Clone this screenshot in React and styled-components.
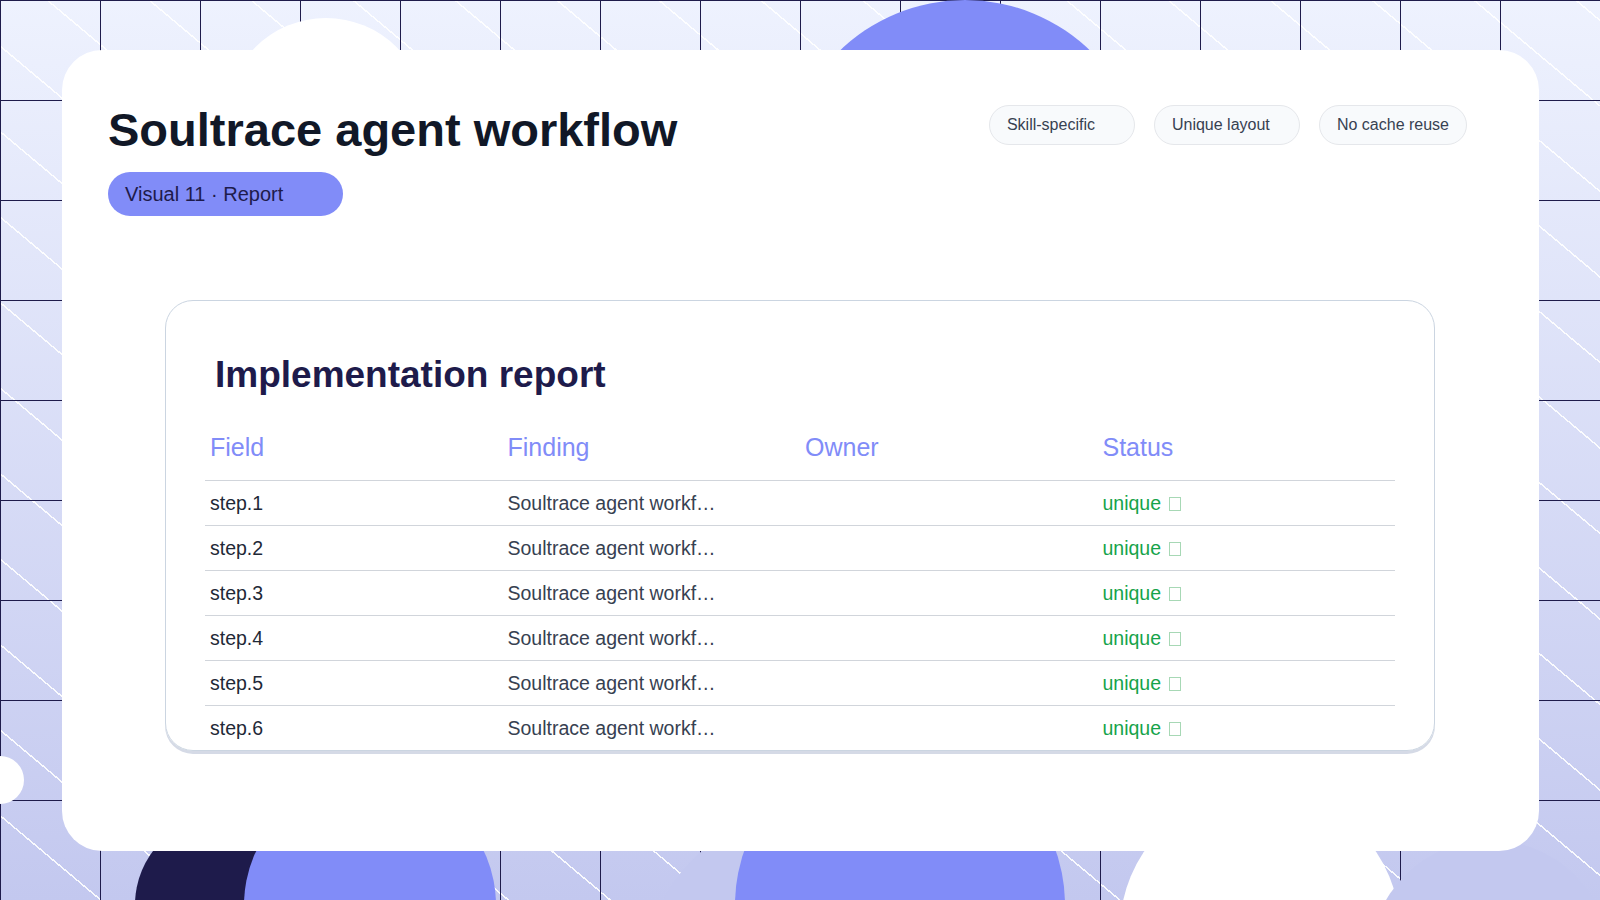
import React from "react";
import styled, { createGlobalStyle } from "styled-components";

const Global = createGlobalStyle`
  html, body { margin: 0; padding: 0; }
  body { font-family: "Liberation Sans", Arial, sans-serif; }
`;

const Stage = styled.div`
  position: relative;
  width: 1600px;
  height: 900px;
  overflow: hidden;
  background:
    repeating-linear-gradient(to right, #1e1b4b 0 1px, transparent 1px 100px),
    repeating-linear-gradient(to bottom, #1e1b4b 0 1px, transparent 1px 100px),
    repeating-linear-gradient(40deg, transparent 0 64px, rgba(255,255,255,0.9) 64px 65.5px),
    linear-gradient(to bottom, #eef2fe, #c3c8ef);
  display: flex;
  padding: 50px 61px 49px 62px;
  box-sizing: border-box;
`;

const Blob = styled.div`
  position: absolute;
  border-radius: 50%;
  background: ${p => p.$c};
  left: ${p => p.$x - p.$r}px;
  top: ${p => p.$y - p.$r}px;
  width: ${p => p.$r * 2}px;
  height: ${p => p.$r * 2}px;
`;

const Card = styled.main`
  position: relative;
  z-index: 1;
  flex: 1;
  background: #fff;
  border-radius: 40px;
  padding: 52px 72px 0 46px;
  display: flex;
  flex-direction: column;
`;

const Header = styled.header`
  display: flex;
  justify-content: space-between;
  align-items: flex-start;
`;

const TitleBlock = styled.div`
  display: flex;
  flex-direction: column;
  align-items: flex-start;
  gap: 14px;
`;

const Title = styled.h1`
  margin: 0;
  font-size: 47px;
  font-weight: 700;
  color: #111827;
  line-height: 56px;
`;

const Pill = styled.div`
  width: 235px;
  height: 44px;
  box-sizing: border-box;
  padding: 0 17px;
  display: flex;
  align-items: center;
  background: #818cf8;
  color: #1e1b4b;
  border-radius: 22px;
  font-size: 20px;
`;

const Chips = styled.div`
  display: flex;
  gap: 19px;
  margin-top: 3px;
`;

const Chip = styled.span`
  height: 40px;
  box-sizing: border-box;
  padding: 0 17px;
  min-width: 146px;
  display: flex;
  align-items: center;
  background: #f8fafc;
  border: 1px solid #e5e7eb;
  border-radius: 20px;
  font-size: 16px;
  color: #374151;
`;

const Panel = styled.section`
  margin: 84px 0 0 57px;
  width: 1270px;
  box-sizing: border-box;
  border: 1.5px solid #cbd5e1;
  border-radius: 28px;
  box-shadow: 0 3px 0 #d5dae6;
  padding: 52px 39px 0 39px;
`;

const PanelTitle = styled.h2`
  margin: 0 0 28px 10px;
  font-size: 37px;
  font-weight: 700;
  color: #1e1b4b;
  line-height: 44px;
`;

const Table = styled.table`
  width: 100%;
  border-collapse: collapse;
`;

const Th = styled.th`
  text-align: left;
  font-weight: 400;
  font-size: 25px;
  color: #818cf8;
  padding: 0 5px 10px;
  height: 45px;
  border-bottom: 1.5px solid #d1d5db;
  width: 25%;
`;

const Td = styled.td`
  font-size: 19.5px;
  color: ${p => p.$c || "#374151"};
  padding: 0 5px;
  height: 44px;
  vertical-align: middle;
`;

const Tr = styled.tr`
  & + & td { border-top: 1px solid #d1d5db; }
`;

const Tofu = styled.span`
  display: inline-block;
  width: 10px;
  height: 12px;
  border: 1px solid #a7d8b5;
  margin-left: 8px;
  vertical-align: -1px;
`;

const rows = [1, 2, 3, 4, 5, 6];

export default function App() {
  return (
    <Stage>
      <Global />
      <Blob $c="#fff" $x={326} $y={118} $r={100} />
      <Blob $c="#818cf8" $x={965} $y={180} $r={180} />
      <Blob $c="#fff" $x={0} $y={780} $r={24} />
      <Blob $c="#1e1b4b" $x={225} $y={905} $r={90} />
      <Blob $c="#818cf8" $x={370} $y={905} $r={126} />
      <Blob $c="#c3c8ef" $x={790} $y={960} $r={140} />
      <Blob $c="#818cf8" $x={900} $y={905} $r={165} />
      <Blob $c="#fff" $x={1260} $y={930} $r={140} />
      <Blob $c="#c3c8ef" $x={1490} $y={960} $r={120} />
      <Card>
        <Header>
          <TitleBlock>
            <Title>Soultrace agent workflow</Title>
            <Pill>Visual 11 · Report</Pill>
          </TitleBlock>
          <Chips>
            <Chip>Skill-specific</Chip>
            <Chip>Unique layout</Chip>
            <Chip>No cache reuse</Chip>
          </Chips>
        </Header>
        <Panel>
          <PanelTitle>Implementation report</PanelTitle>
          <Table>
            <thead>
              <tr>
                <Th>Field</Th>
                <Th>Finding</Th>
                <Th>Owner</Th>
                <Th>Status</Th>
              </tr>
            </thead>
            <tbody>
              {rows.map(n => (
                <Tr key={n}>
                  <Td $c="#1f2937">step.{n}</Td>
                  <Td>Soultrace agent workf…</Td>
                  <Td></Td>
                  <Td $c="#16a34a">unique<Tofu /></Td>
                </Tr>
              ))}
            </tbody>
          </Table>
        </Panel>
      </Card>
    </Stage>
  );
}
